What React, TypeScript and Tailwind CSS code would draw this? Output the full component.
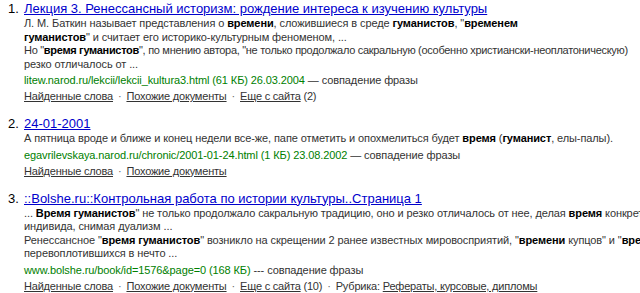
import React from "react";

const B = ({ children }: { children: React.ReactNode }) => (
  <b className="font-bold text-black">{children}</b>
);

const Sep = () => <span className="mx-[5px] text-[#666]">·</span>;

const L = ({ children }: { children: React.ReactNode }) => (
  <span className="underline text-[#333]">{children}</span>
);

function Item({
  n,
  title,
  lines,
  url,
  extra,
}: {
  n: number;
  title: string;
  lines: React.ReactNode[];
  url: React.ReactNode;
  extra: React.ReactNode;
}) {
  return (
    <div className="flex">
      <div className="w-[16px] shrink-0 text-[13px] leading-[16px] text-black">{n}.</div>
      <div className="flex flex-col">
        <div className="text-[13px] leading-[16px] text-[#0000cc] underline whitespace-nowrap">{title}</div>
        <div className="text-[11px] leading-[13.5px] text-[#333] whitespace-nowrap tracking-[-0.1px]">
          {lines.map((l, i) => (
            <div key={i}>{l}</div>
          ))}
        </div>
        <div className="mt-[2px] text-[11px] leading-[14px] whitespace-nowrap tracking-[-0.1px]">{url}</div>
        <div className="mt-[2px] text-[11px] leading-[14px] text-[#333] whitespace-nowrap tracking-[-0.2px]">{extra}</div>
      </div>
    </div>
  );
}

export default function App() {
  return (
    <div
      className="w-[640px] h-[293px] overflow-hidden bg-white"
      style={{ fontFamily: '"Liberation Sans", Arial, sans-serif' }}
    >
      <div className="flex flex-col gap-[13px] pl-[8px] pt-[1px] w-[800px]">
        <Item
          n={1}
          title="Лекция 3. Ренессансный историзм: рождение интереса к изучению культуры"
          lines={[
            <>Л. М. Баткин называет представления о <B>времени</B>, сложившиеся в среде <B>гуманистов</B>, "<B>временем</B></>,
            <><B>гуманистов</B>" и считает его историко-культурным феноменом, ...</>,
            <span className="tracking-[-0.3px]">Но "<B>время гуманистов</B>", по мнению автора, "не только продолжало сакральную (особенно христиански-неоплатоническую)</span>,
            <>резко отличалось от ...</>,
          ]}
          url={
            <>
              <span className="text-[#008000]">litew.narod.ru/lekcii/lekcii_kultura3.html (61 КБ) 26.03.2004</span>
              <span className="text-[#333]"> — совпадение фразы</span>
            </>
          }
          extra={
            <>
              <L>Найденные слова</L>
              <Sep />
              <L>Похожие документы</L>
              <Sep />
              <L>Еще с сайта</L> (2)
            </>
          }
        />
        <Item
          n={2}
          title="24-01-2001"
          lines={[
            <>А пятница вроде и ближе и конец недели все-же, папе отметить и опохмелиться будет <B>время</B> (<B>гуманист</B>, елы-палы).</>,
          ]}
          url={
            <>
              <span className="text-[#008000]">egavrilevskaya.narod.ru/chronic/2001-01-24.html (1 КБ) 23.08.2002</span>
              <span className="text-[#333]"> — совпадение фразы</span>
            </>
          }
          extra={
            <>
              <L>Найденные слова</L>
              <Sep />
              <L>Похожие документы</L>
            </>
          }
        />
        <Item
          n={3}
          title="::Bolshe.ru::Контрольная работа по истории культуры..Страница 1"
          lines={[
            <>... <B>Время гуманистов</B>" не только продолжало сакральную традицию, оно и резко отличалось от нее, делая <B>время</B> конкретного</>,
            <>индивида, снимая дуализм ...</>,
            <>Ренессансное "<B>время гуманистов</B>" возникло на скрещении 2 ранее известных мировосприятий, "<B>времени</B> купцов" и "<B>времени</B> рыцарей"</>,
            <>перевоплотившихся в нечто ...</>,
          ]}
          url={
            <>
              <span className="text-[#008000]">www.bolshe.ru/book/id=1576&amp;page=0 (168 КБ)</span>
              <span className="text-[#333]"> --- совпадение фразы</span>
            </>
          }
          extra={
            <>
              <L>Найденные слова</L>
              <Sep />
              <L>Похожие документы</L>
              <Sep />
              <L>Еще с сайта</L> (10)
              <Sep />
              Рубрика: <L>Рефераты, курсовые, дипломы</L>
            </>
          }
        />
      </div>
    </div>
  );
}
